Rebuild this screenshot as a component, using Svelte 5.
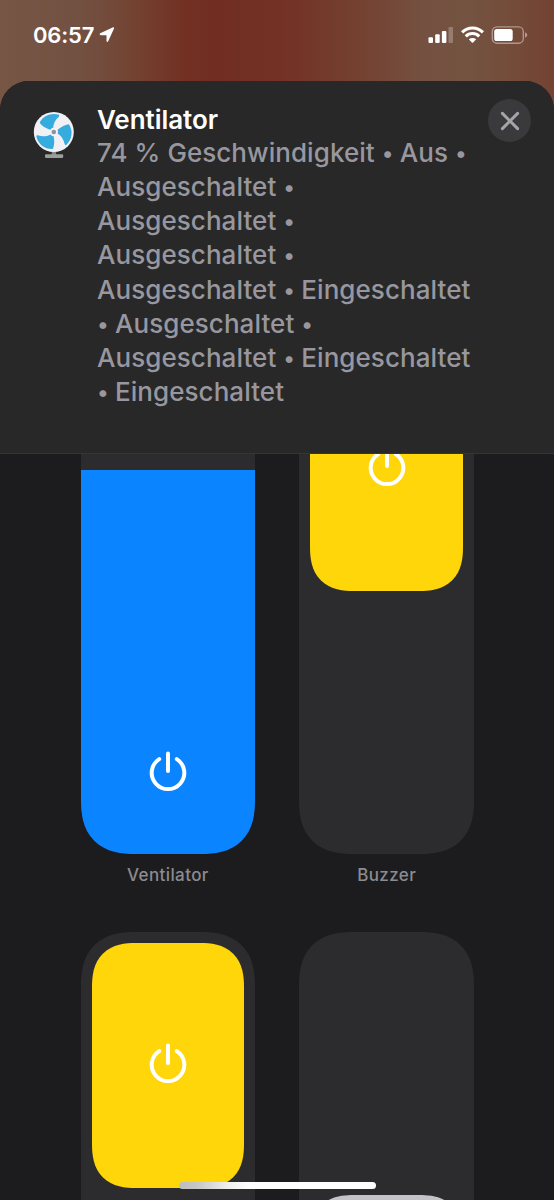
<script>
  // Status text of every accessory in the group, one entry per line
  const statusLines = [
    '74 % Geschwindigkeit • Aus •',
    'Ausgeschaltet •',
    'Ausgeschaltet •',
    'Ausgeschaltet •',
    'Ausgeschaltet • Eingeschaltet',
    '• Ausgeschaltet •',
    'Ausgeschaltet • Eingeschaltet',
    '• Eingeschaltet'
  ];

  // Keep the separators apart from the words so they can be styled
  const split = (line) => line.split(/(•)/).filter((part) => part !== '');

  let tiles = $state([
    { name: 'Ventilator', type: 'slider', level: 74 },
    { name: 'Buzzer', type: 'switch', on: true },
    { name: '', type: 'switch', on: true },
    { name: '', type: 'switch', on: false }
  ]);

  const toggle = (tile) => {
    if (tile.type === 'switch') {
      tile.on = !tile.on;
    } else {
      tile.level = tile.level > 0 ? 0 : 74;
    }
  };
</script>

{#snippet power()}
  <svg class="power" width="38" height="42" viewBox="0 0 38 42">
    <path d="M10.2 8.1 A16.3 16.3 0 1 0 27.8 8.1" />
    <path d="M19 2.5 V20" />
  </svg>
{/snippet}

<div class="screen">
  <div class="status-bar">
    <div class="clock">
      <span>06:57</span>
      <svg width="16" height="17" viewBox="0 0 16 17">
        <path d="M1.2 7.3 L13.6 1.5 Q15.6 .8 14.9 2.8 L9.2 15.3 Q8 17 7.5 14.9 V9.3 H1.9 Q-.3 8.8 1.2 7.3Z" fill="#fff" />
      </svg>
    </div>
    <div class="indicators">
      <svg width="26" height="18" viewBox="0 0 26 18">
        <rect x="-0.5" y="11.2" width="4.5" height="5.8" rx="1.1" fill="#fff" />
        <rect x="6.2" y="8.2" width="4.5" height="8.8" rx="1.1" fill="#fff" />
        <rect x="12.9" y="5" width="4.5" height="12" rx="1.1" fill="#fff" />
        <rect x="19.5" y="1" width="4.5" height="16" rx="1.1" fill="#fff" opacity=".25" />
      </svg>
      <svg width="24" height="18" viewBox="0 0 24 18">
        <g fill="none" stroke="#fff" stroke-width="3.1">
          <path d="M1.1 6.3 A14.8 14.8 0 0 1 21.9 6.3" />
          <path d="M4.8 10.3 A9.4 9.4 0 0 1 18.2 10.3" />
        </g>
        <path d="M7.8 13.3 Q11.5 10.7 15.2 13.3 L12.1 16.5 Q11.5 17.1 10.9 16.5Z" fill="#fff" />
      </svg>
      <svg width="37" height="18" viewBox="0 0 37 18">
        <rect x="1.3" y="0.9" width="31" height="16.3" rx="4.8" fill="none" stroke="#fff" stroke-width="1.4" opacity=".42" />
        <rect x="3.2" y="2.9" width="18.5" height="12.2" rx="2.6" fill="#fff" />
        <path d="M34 6.2 Q36.3 7.2 36.3 9 T34 11.8Z" fill="#fff" opacity=".45" />
      </svg>
    </div>
  </div>

  <div class="sheet">
    <header>
      <svg class="fan" width="42" height="48" viewBox="0 0 42 48">
        <rect x="18.7" y="39" width="4.4" height="6" fill="#858885" />
        <rect x="12" y="43.2" width="18.2" height="3.7" rx="1.2" fill="#9b9e9b" />
        <circle cx="20.8" cy="21" r="20" fill="#f0f0f5" />
        <g fill="#35abde">
          {#each [0, 120, 240] as angle}
            <path
              transform="rotate({angle} 20.8 21)"
              d="M20.2 18 C20 13 22 9 26 5.4 Q26.9 4.2 25.5 3.6 C18 1.6 10.5 4.6 7 11 C6.4 12.2 7.2 12.6 8.1 13.4 C11 16.6 14 17.2 18 19.2Z"
            />
          {/each}
        </g>
        <circle cx="20.8" cy="21" r="4.2" fill="#f4f4f8" />
        <circle cx="20.8" cy="21" r="2.3" fill="#8d929b" />
      </svg>

      <div class="info">
        <h1>Ventilator</h1>
        <p>
          {#each statusLines as line}
            <span class="line">{#each split(line) as part}{#if part === '•'}<span class="dot">•</span>{:else}{part}{/if}{/each}</span>
          {/each}
        </p>
      </div>

      <button class="close" aria-label="Schließen">
        <svg width="20" height="20" viewBox="0 0 20 20">
          <path d="M2.4 2.4 L17.6 17.6 M17.6 2.4 L2.4 17.6" />
        </svg>
      </button>
    </header>

    <main>
      <div class="tiles">
        {#each tiles as tile}
          <div class="tile">
            <button class="track {tile.type}" class:on={tile.on} aria-label={tile.name} onclick={() => toggle(tile)}>
              {#if tile.type === 'slider'}
                <div class="fill" style="height: {tile.level}%">
                  {@render power()}
                </div>
              {:else}
                <div class="knob">
                  {@render power()}
                </div>
              {/if}
            </button>
            <div class="label">{tile.name}</div>
          </div>
        {/each}
      </div>
    </main>
  </div>

  <div class="home-indicator"></div>
</div>

<style>
  :global(body) {
    background: #1c1c1e;
  }

  .screen {
    position: relative;
    width: 554px;
    height: 1200px;
    display: flex;
    flex-direction: column;
    overflow: hidden;
    font-family: Inter, "Liberation Sans", sans-serif;
    background: linear-gradient(90deg, #775646 0, #735142 75px, #724a3a 110px, #73402f 140px, #723023 185px, #712d21 215px, #733024 275px, #744030 355px, #745040 420px, #745341 470px, #744b39 515px, #734232 554px);
  }

  .status-bar {
    flex: none;
    height: 81px;
    display: flex;
    justify-content: space-between;
    box-sizing: border-box;
    padding: 26px 26px 0 33px;
  }

  .clock {
    display: flex;
    gap: 5px;
    color: #fff;
    font-size: 22px;
    font-weight: 600;
    line-height: 19px;
    letter-spacing: -0.2px;
  }

  .indicators {
    display: flex;
    gap: 6px;
  }

  .indicators svg {
    overflow: visible;
  }

  .sheet {
    flex: 1;
    min-height: 0;
    display: flex;
    flex-direction: column;
    overflow: hidden;
    border-radius: 29px 29px 0 0;
    background: #1c1c1e;
  }

  header {
    flex: none;
    height: 373px;
    display: flex;
    box-sizing: border-box;
    padding: 18px 23px 0 33px;
    border-bottom: 1px solid #353537;
    background: #282828;
  }

  .fan {
    flex: none;
    margin-top: 12px;
  }

  .info {
    flex: 1;
    padding: 4px 0 0 22px;
    white-space: nowrap;
  }

  h1 {
    margin: 0;
    color: #fff;
    font-size: 26px;
    font-weight: 600;
    line-height: 34px;
    letter-spacing: -0.05px;
  }

  p {
    margin: -1px 0 0;
    color: #98979f;
    font-size: 26px;
    font-weight: 550;
    line-height: 34.15px;
    letter-spacing: 0.06px;
  }

  .line {
    display: block;
  }

  .dot {
    display: inline-block;
    width: 11px;
    font-size: 22px;
    line-height: 20px;
    text-align: center;
    vertical-align: 1px;
  }

  button {
    padding: 0;
    border: 0;
  }

  .close {
    flex: none;
    width: 43px;
    height: 43px;
    display: flex;
    align-items: center;
    justify-content: center;
    border-radius: 50%;
    background: #3a3a3d;
  }

  .close path {
    fill: none;
    stroke: #a5a4ab;
    stroke-width: 3;
    stroke-linecap: round;
  }

  main {
    flex: 1;
    min-height: 0;
    overflow: hidden;
  }

  /* scrolled so that the first row is partly under the header */
  .tiles {
    display: grid;
    grid-template-columns: 174.5px 174.5px;
    column-gap: 44.3px;
    justify-content: center;
    margin-top: -118.6px;
    padding-left: 0.6px;
  }

  .tile {
    height: 597px;
  }

  .track {
    width: 100%;
    height: 518.3px;
    display: flex;
    flex-direction: column;
    overflow: hidden;
    box-sizing: border-box;
    border-radius: 44px;
    background: #2c2c2e;
  }

  .slider {
    justify-content: flex-end;
  }

  .fill {
    display: flex;
    align-items: flex-end;
    justify-content: center;
    box-sizing: border-box;
    padding-bottom: 61px;
    background: #0a84ff;
  }

  .switch {
    justify-content: flex-end;
    padding: 11px;
  }

  .switch.on {
    justify-content: flex-start;
  }

  .knob {
    height: 244.3px;
    display: flex;
    align-items: center;
    justify-content: center;
    box-sizing: border-box;
    padding-bottom: 2.5px;
    border-radius: 36px;
    background: #c5c3ca;
  }

  .on .knob {
    background: #ffd60a;
  }

  @supports (corner-shape: superellipse(1.3)) {
    .track {
      border-radius: 54px;
      corner-shape: superellipse(1.3);
    }

    .knob {
      border-radius: 44px;
      corner-shape: superellipse(1.3);
    }
  }

  .power {
    display: block;
    fill: none;
    stroke: #fff;
    stroke-width: 4;
    stroke-linecap: round;
  }

  .label {
    margin-top: 10.5px;
    color: #8b8b90;
    font-size: 17px;
    font-weight: 550;
    line-height: 23px;
    letter-spacing: 0.4px;
    text-align: center;
  }

  .home-indicator {
    position: absolute;
    left: 179px;
    bottom: 11px;
    width: 197px;
    height: 7px;
    border-radius: 4px;
    background: linear-gradient(90deg, #bdbdbd 0, #c6c6c6 18px, #f0f0f0 50px, #fff 70px);
  }
</style>
